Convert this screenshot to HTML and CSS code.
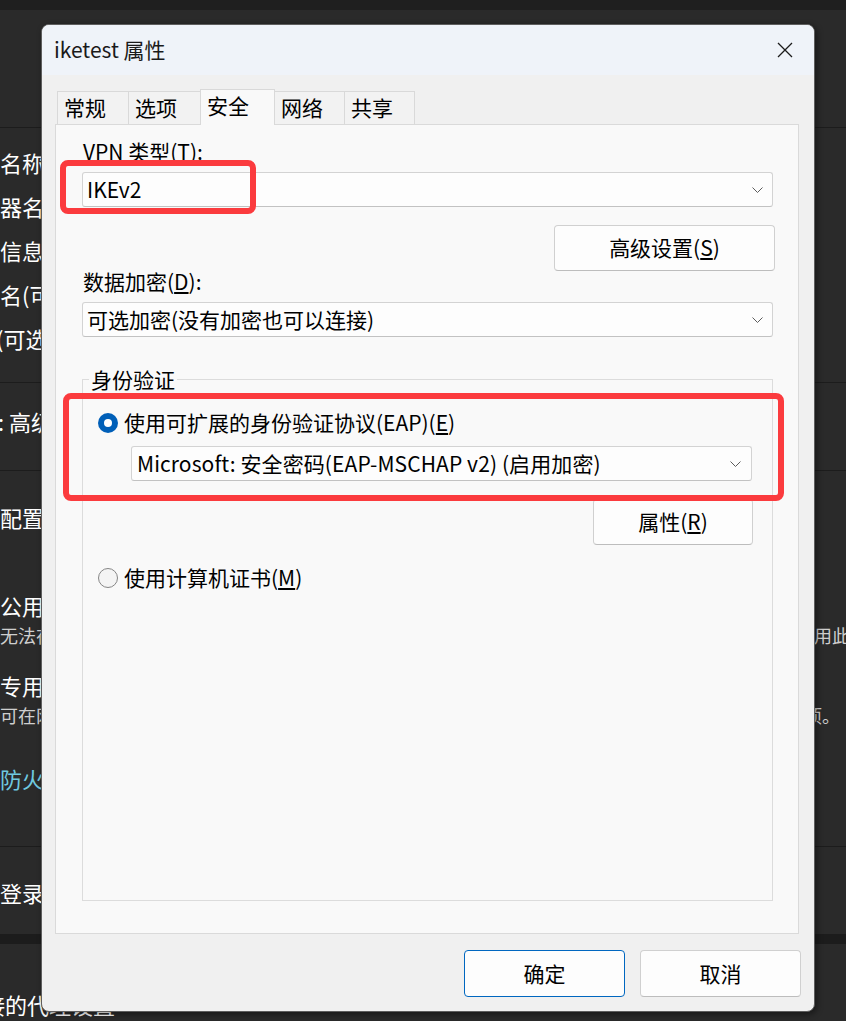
FILE: index.html
```html
<!DOCTYPE html>
<html lang="zh-CN">
<head>
<meta charset="utf-8">
<title>iketest 属性</title>
<link rel="stylesheet" href="styles.css">
</head>
<body>
<div class="desktop">
  <div class="strip"></div>
  <section class="card c1"></section>
  <section class="card c2">
    <div class="bl"><span class="t cut">连接名称</span></div>
    <div class="bl"><span class="t cut">服务器名称或地址</span></div>
    <div class="bl"><span class="t cut">登录信息类型</span></div>
    <div class="bl"><span class="t cut">用户名(可选)</span></div>
    <div class="bl"><span class="t cut3">密码(可选)</span></div>
  </section>
  <section class="card c3">
    <div class="bl"><span class="t cut4">其他: 高级选项</span></div>
  </section>
  <section class="card c4">
    <div class="bl"><span class="t cut">网络配置文件类型</span></div>
    <div class="bl b-pub"><span class="t">公用网络</span></div>
    <div class="sl"><span class="t">无法在此网络上发现你的设备。在大多数情况下可以使用此设置。</span><span class="r r1">用此设置</span></div>
    <div class="bl b-pri"><span class="t">专用网络</span></div>
    <div class="sl"><span class="t">可在网络上发现你的设备，你可以使用此网络进行文件共享等选项。</span><span class="r r2">选项。</span></div>
    <div class="bl b-fw"><span class="t link">防火墙和安全设置</span></div>
  </section>
  <section class="card c5">
    <div class="bl"><span class="t">登录时自动连接</span></div>
  </section>
  <div class="band"></div>
  <section class="card c6">
    <div class="bl"><span class="t cut2">连接的代理设置</span></div>
  </section>
</div>

<div class="dialog">
  <div class="titlebar">
    <span class="title">iketest 属性</span>
    <svg class="close" width="16" height="16" viewBox="0 0 16 16"><path d="M1 1L15 15M15 1L1 15" stroke="#1b1b1b" stroke-width="1.3" fill="none"/></svg>
  </div>
  <div class="body">
    <div class="tabs">
      <div class="tab w1">常规</div>
      <div class="tab w2">选项</div>
      <div class="tab sel w3">安全</div>
      <div class="tab w4">网络</div>
      <div class="tab w5">共享</div>
    </div>
    <div class="panel">
      <div class="lbl">VPN 类型(T):</div>
      <div class="combo c-vpn"><span>IKEv2</span><svg width="11" height="6" viewBox="0 0 11 6"><path d="M0.5 0.5L5.5 5.5L10.5 0.5" fill="none" stroke="#5c5c5c" stroke-width="1"/></svg></div>
      <div class="btn adv">高级设置(<u>S</u>)</div>
      <div class="lbl">数据加密(<u>D</u>):</div>
      <div class="combo c-enc"><span>可选加密(没有加密也可以连接)</span><svg width="11" height="6" viewBox="0 0 11 6"><path d="M0.5 0.5L5.5 5.5L10.5 0.5" fill="none" stroke="#5c5c5c" stroke-width="1"/></svg></div>
      <fieldset class="group">
        <legend>身份验证</legend>
        <div class="radio-row"><span class="radio on"></span><span>使用可扩展的身份验证协议(EAP)(<u>E</u>)</span></div>
        <div class="combo c-eap"><span class="wide">Microsoft: 安全密码(EAP-MSCHAP v2) (启用加密)</span><svg width="11" height="6" viewBox="0 0 11 6"><path d="M0.5 0.5L5.5 5.5L10.5 0.5" fill="none" stroke="#5c5c5c" stroke-width="1"/></svg></div>
        <div class="btn prop">属性(<u>R</u>)</div>
        <div class="radio-row r-cert"><span class="radio"></span><span>使用计算机证书(<u>M</u>)</span></div>
      </fieldset>
    </div>
    <div class="actions">
      <div class="btn act default">确定</div>
      <div class="btn act">取消</div>
    </div>
  </div>
  <div class="mark m1"></div>
  <div class="mark m2"></div>
</div>
</body>
</html>
```
FILE: styles.css
```css
* { box-sizing: border-box; }
html, body { margin: 0; padding: 0; }
body {
  width: 846px;
  height: 1021px;
  overflow: hidden;
  background: #2a2a2a;
  position: relative;
  font-family: "Noto Sans CJK SC", sans-serif;
}

/* background settings page */
.desktop { display: flex; flex-direction: column; height: 1021px; color: #ffffff; font-size: 22px; }
.strip { height: 10px; background: #1f1f1f; flex: none; }
.card { background: #2a2a2a; flex: none; border-bottom: 1px solid #1c1c1c; }
.c1 { height: 118px; }
.c2 { height: 255px; padding-top: 12px; }
.c2 .bl { height: 44px; line-height: 44px; }
.c3 { height: 88px; padding-top: 22px; }
.c4 { height: 376px; padding-top: 30px; }
.c5 { height: 87px; padding-top: 29px; border-bottom: none; }
.c6 { height: 77px; padding-top: 44px; border-bottom: none; }
.band { height: 10px; background: #1c1c1c; flex: none; }
.bl { height: 32px; line-height: 32px; white-space: nowrap; }
.b-pub { margin-top: 56px; }
.b-pri { margin-top: 21px; }
.b-fw { margin-top: 34px; }
.sl { height: 26px; line-height: 26px; margin-top: 1px; font-size: 18px; color: #cfcfcf; white-space: nowrap; display: flex; justify-content: space-between; }
.t { display: inline-block; }
.cut { margin-left: -44px; }
.cut2 { margin-left: -39px; }
.cut3 { margin-left: -48px; }
.cut4 { margin-left: -46px; }
.link { color: #6fc9e0; }
.r { flex: none; }
.r1 { width: 32px; overflow: visible; }
.r2 { padding-right: 6px; }

/* dialog */
.dialog {
  position: absolute;
  left: 41px;
  top: 24px;
  width: 774px;
  height: 988px;
  border: 1px solid #5e5e5e;
  border-radius: 8px;
  background: #f0f0f0;
  overflow: hidden;
  display: flex;
  flex-direction: column;
  box-shadow: 2px 2px 6px rgba(0, 0, 0, 0.45);
  color: #000;
  font-size: 21px;
}
.titlebar {
  height: 50px;
  flex: none;
  background: #eff3f9;
  display: flex;
  align-items: center;
  justify-content: space-between;
  padding: 0 21px 0 12px;
}
.title { line-height: 24px; color: #1a1a1a; margin-bottom: 3px; }
.close { display: block; }

.body { flex: 1; display: flex; flex-direction: column; padding: 14px 15px 0 13px; }

.tabs { display: flex; align-items: flex-end; height: 35px; padding-left: 2px; flex: none; }
.tab {
  height: 33px;
  border: 1px solid #d9d9d9;
  border-bottom: none;
  background: #f2f2f2;
  padding-left: 6px;
  line-height: 30px;
  margin-right: -1px;
  white-space: nowrap;
}
.tab.sel { height: 36px; margin-bottom: -1px; background: #f9f9f9; position: relative; z-index: 1; line-height: 31px; }
.w1 { width: 72px; }
.w2 { width: 73px; }
.w3 { width: 75px; }
.w4 { width: 71px; }
.w5 { width: 71px; }

.panel {
  height: 810px;
  flex: none;
  border: 1px solid #dadada;
  background: #f9f9f9;
  display: flex;
  flex-direction: column;
  padding: 16px 25px 32px 26px;
}
.lbl { line-height: 20px; padding-left: 1px; white-space: nowrap; }
.panel .lbl + .combo { margin-top: 11px; }

.combo {
  height: 35px;
  flex: none;
  border: 1px solid #d3d3d3;
  border-bottom-color: #c2c2c2;
  border-radius: 3px;
  background: #fdfdfd;
  display: flex;
  align-items: center;
  justify-content: space-between;
  padding: 0 9px 2px 4px;
  white-space: nowrap;
}
.combo svg { display: block; flex: none; margin-top: 2px; }
.c-eap { margin: 11px 0 0 33px; width: 621px; padding: 0 10px 2px 5px; }
.wide { letter-spacing: 0.1px; }

.btn {
  height: 46px;
  flex: none;
  border: 1px solid #d0d0d0;
  border-bottom-color: #bdbdbd;
  border-radius: 4px;
  background: #fdfdfd;
  display: flex;
  align-items: center;
  justify-content: center;
  padding-bottom: 2px;
  white-space: nowrap;
}
.adv { width: 221px; align-self: flex-end; margin: 18px -2px 0 0; }
.prop { width: 160px; align-self: flex-end; margin: 18px -1px 0 0; }

.group {
  margin: 32px 0 0 0;
  padding: 22px 20px 0 15px;
  border: 1px solid #dcdcdc;
  flex: 1;
  min-width: 0;
  display: flex;
  flex-direction: column;
}
.group legend { padding: 0 2px; margin-left: -9px; line-height: 20px; }

.radio-row { display: flex; align-items: center; gap: 6px; height: 24px; white-space: nowrap; }
.radio-row span:last-child { margin-top: -2px; }
.r-cert { margin-top: 21px; }
.radio {
  width: 20px;
  height: 20px;
  border-radius: 50%;
  border: 1px solid #868686;
  background: #f4f4f4;
  display: flex;
  align-items: center;
  justify-content: center;
  flex: none;
}
.radio.on { border: none; background: #005fb8; }
.radio.on::after { content: ""; width: 8px; height: 8px; border-radius: 50%; background: #fff; }

u { text-underline-offset: 2px; }

.actions { display: flex; justify-content: flex-end; gap: 15px; margin: 16px -2px 0 0; flex: none; }
.act { width: 161px; height: 47px; }
.default { border: 1px solid #0067c0; }

/* red annotation boxes */
.mark { position: absolute; border: 6px solid #fb3b3e; border-radius: 8px; }
.m1 { left: 18px; top: 135px; width: 196px; height: 54px; }
.m2 { left: 21px; top: 368px; width: 721px; height: 108px; }
```
